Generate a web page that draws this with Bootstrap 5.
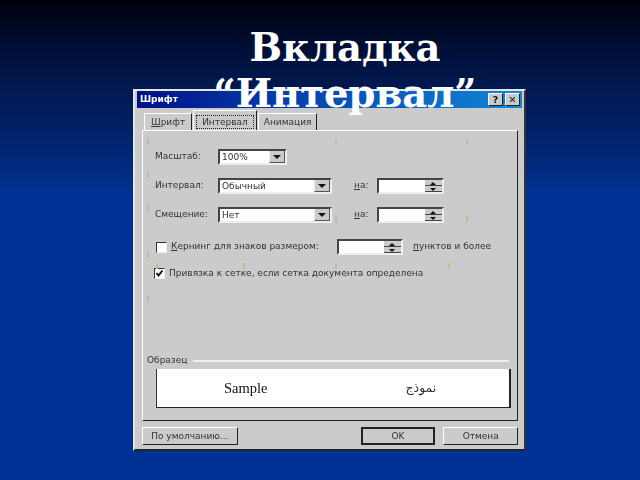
<!DOCTYPE html>
<html lang="ru">
<head>
<meta charset="utf-8">
<title>Вкладка “Интервал”</title>
<link href="https://cdn.jsdelivr.net/npm/bootstrap@5.3.0/dist/css/bootstrap.min.css" rel="stylesheet">
<style>
html,body{height:480px;overflow:hidden}
body{background:linear-gradient(180deg,#00000e 0,#00133f 60px,#002a80 170px,#003296 195px,#003296 480px);font-family:"DejaVu Sans",sans-serif}
.slide-title{height:89px;position:relative;z-index:2;font-family:"DejaVu Serif",serif;font-weight:700;font-size:38.5px;line-height:46px;color:#fff;text-align:center;padding:25px 0 0 50px;margin:0}
.slide-title span{display:block;white-space:nowrap}
.dlg{width:393px;height:362px;margin-left:133px;background:#cbcbcb;border:2px solid;border-color:#e6e6e6 #333 #222 #e6e6e6;padding:0 6px 0 7px;font-size:9px;color:#333;position:relative;filter:blur(.5px)}
.tbar{height:17px;margin:0 -4px 0 -5px;background:linear-gradient(90deg,#00108a,#1088d8);color:#fff;font-weight:700;padding-left:3px;padding-right:2px;gap:2px}
.tb-btn{width:15px;height:13px;background:#cbcbcb;border:1px solid;border-color:#fff #222 #222 #fff;color:#111;font-size:9.5px;font-weight:700;line-height:11px;text-align:center}
.tabrow{height:22px;padding:5px 0 0 2px}
.wtab{background:#cbcbcb;border:1px solid;border-color:#fff #222 transparent #fff;border-bottom:0;height:17px;padding:2px 6px 0;white-space:nowrap}
.wtab.t3{margin-left:1px;padding:2px 5px 0}
.wtab.on{height:20px;margin-top:-3px;padding:4px 2px 0;position:relative;z-index:1;margin-left:1px}
.wtab.on b{font-weight:400;border:1px dotted #222;padding:1px 5px;display:block;line-height:10px}
.panel{height:291px;border:1px solid;border-color:#fff #222 #222 #fff;padding:18px 0 0 12px;flex-direction:column}
.frow{height:16px;margin-bottom:13px}
.lbl{width:63px;flex:none;white-space:nowrap}
.sunk{background:#fff;border:2px solid;border-color:#444 #eee #eee #444;height:16px;padding-left:2px;line-height:12px}
.combo{width:114px}
.combo.sm{width:69px}
.arrow{width:16px;height:12px;background:#cbcbcb;border-left:1px solid #eee;border-bottom:1px solid #555;border-right:1px solid #555}
.arrow i{display:block;width:0;height:0;margin:4px auto 0;border:4px solid transparent;border-top:4px solid #111;border-bottom:0}
.spin{width:67px;padding:0}
.spinb{width:17px;height:12px;background:#cbcbcb;flex-direction:column}
.spinb i{flex:1;border-bottom:1px solid #444;position:relative;display:block}
.spinb i::after{content:"";position:absolute;left:5px;top:1.5px;border:3px solid transparent}
.spinb i.up::after{border-bottom:3px solid #111;border-top:0}
.spinb i.dn::after{border-top:3px solid #111;border-bottom:0}
.na{width:23px;margin-left:22px;flex:none}
.cb{width:11px;height:11px;background:#fff;border:1.5px solid;border-color:#333 #eee #eee #333;flex:none}
.kern{margin-top:3px;padding-left:1px}
.kern .t{width:166px;margin-left:4px;flex:none;white-space:nowrap}
.spin2{width:66px}
.kern .tail{margin-left:10px;white-space:nowrap}
.snap{margin-top:12px;margin-left:-1px}
.snap .t{margin-left:4px;white-space:nowrap}
.cb svg{display:block}
.sample-head{margin:73px 0 0 -8px;height:14px}
.sample-head hr{flex:1;margin:0 8px 0 6px;border:0;border-top:2px solid #eee;opacity:1}
.sample-box{height:39px;width:355px;margin:1px 0 0 1px;background:#fff;border-left:1px solid #333;border-right:2px solid #222;border-bottom:1px solid #222;padding-top:2px}
.s1{font-family:"Liberation Serif",serif;font-size:14.5px;color:#111;margin-left:67px}
.s2{font-family:"DejaVu Sans",sans-serif;font-size:12.5px;margin-left:138px;color:#333}
.dbtns{padding-top:6px}
.wbtn{height:18px;background:#cbcbcb;border:1px solid;border-color:#fff #222 #222 #fff;border-radius:0;padding:0;font-size:9px;color:#333;line-height:15px;text-align:center}
.wbtn.def{border:2px solid #222}
.w1{width:96px}.w2{width:75px;margin-left:123px}.w3{width:75px;margin-left:8px}
.tick{position:absolute;width:2px;height:6px;background:#c9b98a}
.tick.t1{left:12px;top:47px}.tick.t2{left:12px;top:81px}.tick.t3b{left:12px;top:114px}
.tick.t4{left:200px;top:48px}.tick.t5{left:331px;top:48px}.tick.t6{left:331px;top:125px}.tick.t7{left:200px;top:125px}
.tick.t8{left:12px;top:161px}.tick.t9{left:21px;top:172px}.tick.t10{left:108px;top:172px}
.tick.t11{left:200px;top:172px}.tick.t12{left:313px;top:172px}.tick.t13{left:12px;top:205px}
</style>
</head>
<body class="m-0 p-0">
<h1 class="slide-title"><span>Вкладка</span><span>“Интервал”</span></h1>
<div class="dlg">
  <div class="tbar d-flex align-items-center">
    <span class="flex-grow-1">Шрифт</span>
    <span class="tb-btn">?</span><span class="tb-btn">✕</span>
  </div>
  <div class="tabrow d-flex">
    <div class="wtab"><u>Ш</u>рифт</div>
    <div class="wtab on"><b>Интервал</b></div>
    <div class="wtab t3">Анимация</div>
  </div>
  <div class="panel d-flex">
    <div class="frow d-flex align-items-center">
      <span class="lbl">Масштаб:</span>
      <div class="sunk combo sm d-flex align-items-center justify-content-between"><span>100%</span><span class="arrow"><i></i></span></div>
    </div>
    <div class="frow d-flex align-items-center">
      <span class="lbl">Интервал:</span>
      <div class="sunk combo d-flex align-items-center justify-content-between"><span>Обычный</span><span class="arrow"><i></i></span></div>
      <span class="na"><u>н</u>а:</span>
      <div class="sunk spin d-flex justify-content-end"><span class="spinb d-flex"><i class="up"></i><i class="dn"></i></span></div>
    </div>
    <div class="frow d-flex align-items-center">
      <span class="lbl">Смещение:</span>
      <div class="sunk combo d-flex align-items-center justify-content-between"><span>Нет</span><span class="arrow"><i></i></span></div>
      <span class="na"><u>н</u>а:</span>
      <div class="sunk spin d-flex justify-content-end"><span class="spinb d-flex"><i class="up"></i><i class="dn"></i></span></div>
    </div>
    <div class="kern d-flex align-items-center">
      <span class="cb"></span><span class="t"><u>К</u>ернинг для знаков размером:</span>
      <div class="sunk spin spin2 d-flex justify-content-end"><span class="spinb d-flex"><i class="up"></i><i class="dn"></i></span></div>
      <span class="tail"><u>п</u>унктов и более</span>
    </div>
    <div class="snap d-flex align-items-center">
      <span class="cb"><svg width="9" height="9" viewBox="0 0 9 9"><path d="M1.5 4 L3.5 6.5 L7.5 1.5" fill="none" stroke="#111" stroke-width="2"/></svg></span><span class="t">Привязка к сетке, если сетка документа определена</span>
    </div>
    <div class="sample-head d-flex align-items-center"><span>Образец</span><hr></div>
    <div class="sample-box d-flex align-items-center"><span class="s1">Sample</span><span class="s2" dir="rtl" lang="ar">نموذج</span></div>
  </div>
  <div class="dbtns d-flex">
    <button class="wbtn w1" type="button">По умолчанию...</button>
    <button class="wbtn def w2" type="button">OK</button>
    <button class="wbtn w3" type="button">Отмена</button>
  </div>
  <span class="tick t1"></span><span class="tick t2"></span><span class="tick t3b"></span>
  <span class="tick t4"></span><span class="tick t5"></span><span class="tick t6"></span><span class="tick t7"></span>
  <span class="tick t8"></span><span class="tick t9"></span><span class="tick t10"></span>
  <span class="tick t11"></span><span class="tick t12"></span><span class="tick t13"></span>
</div>
<script src="https://cdn.jsdelivr.net/npm/bootstrap@5.3.0/dist/js/bootstrap.bundle.min.js"></script>
</body>
</html>
